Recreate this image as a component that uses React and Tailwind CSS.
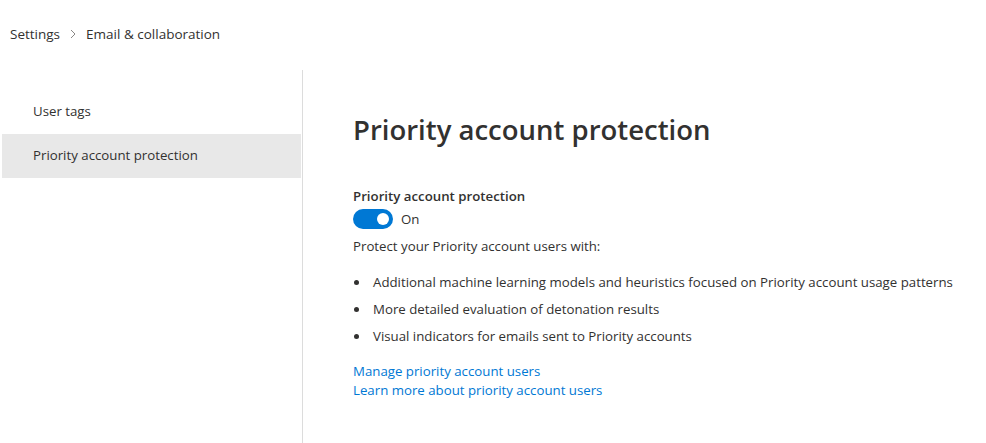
import React from "react";

export default function App() {
  const bullets = [
    "Additional machine learning models and heuristics focused on Priority account usage patterns",
    "More detailed evaluation of detonation results",
    "Visual indicators for emails sent to Priority accounts",
  ];

  return (
    <div className="w-[986px] h-[443px] bg-white text-[#323130] overflow-hidden font-['Open_Sans',sans-serif]">
      {/* Breadcrumb */}
      <div className="h-[68px] flex items-start pt-[24px] pl-[10px] text-[13.5px] leading-[20px]">
        <span>Settings</span>
        <svg className="mx-[9px] mt-[5px]" width="8" height="10" viewBox="0 0 8 10">
          <path d="M2 1 L6 5 L2 9" fill="none" stroke="#8a8886" strokeWidth="1" />
        </svg>
        <span>Email &amp; collaboration</span>
      </div>

      <div className="flex h-[375px]">
        {/* Left nav */}
        <div className="w-[303px] pl-[2px] pt-[20px] border-r border-[#dcdcdc] mt-[2px]">
          <div className="h-[44px] flex items-center pl-[31px] text-[13.25px]">User tags</div>
          <div className="h-[44px] w-[299px] flex items-center pl-[31px] text-[13.25px] bg-[#e8e8e8]">
            Priority account protection
          </div>
        </div>

        {/* Content */}
        <div className="pl-[50px] pt-[44px] flex-1">
          <h1 className="text-[27.5px] leading-[36px] font-semibold text-[#323130]">
            Priority account protection
          </h1>

          <div className="mt-[39px] text-[13.25px] font-semibold leading-[18px]">Priority account protection</div>
          <div className="mt-[4px] flex items-center gap-[8px]">
            <div className="w-[40px] h-[20px] rounded-full bg-[#0078d4] flex items-center justify-end pr-[4px]">
              <div className="w-[12px] h-[12px] rounded-full bg-white" />
            </div>
            <span className="text-[13.25px] leading-[20px]">On</span>
          </div>
          <p className="mt-[7px] text-[13.25px] leading-[20px]">Protect your Priority account users with:</p>

          <ul className="mt-[16px] flex flex-col gap-[7px]">
            {bullets.map((b) => (
              <li key={b} className="flex items-center text-[13.25px] leading-[20px]">
                <span className="w-[5px] h-[5px] rounded-full bg-[#323130] ml-[1px] mr-[14px]" />
                {b}
              </li>
            ))}
          </ul>

          <div className="mt-[16px] flex flex-col text-[13.25px] leading-[19px] text-[#0078d4]">
            <a href="#">Manage priority account users</a>
            <a href="#">Learn more about priority account users</a>
          </div>
        </div>
      </div>
    </div>
  );
}
